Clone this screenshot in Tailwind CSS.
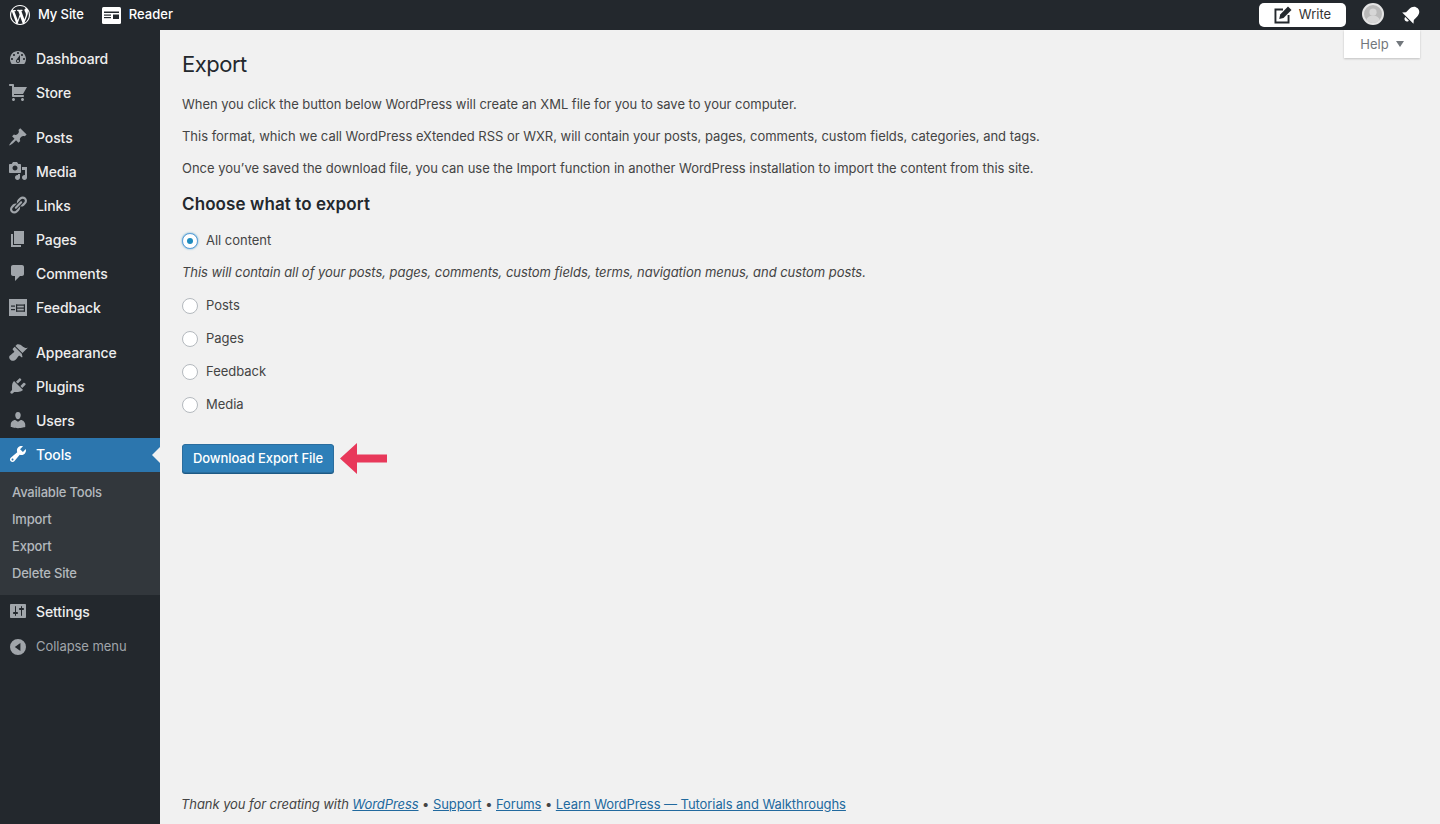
<!DOCTYPE html>
<html lang="en">
  <head>
    <meta charset="UTF-8" />
    <title>Export</title>
    <script src="https://cdn.jsdelivr.net/npm/@tailwindcss/browser@4"></script>
  </head>
  <body class="bg-[#f1f1f1] font-['Inter',sans-serif] text-[13px] text-[#444] h-[824px] overflow-hidden flex flex-col">
    <!-- Admin bar -->
    <header class="h-[30px] bg-[#23282d] flex items-center shrink-0 text-white text-[13px] font-medium">
      <svg class="w-5 h-5 ml-[10px] fill-white" viewBox="0 0 20 20"><path d="M20 10c0-5.51-4.49-10-10-10C4.48 0 0 4.49 0 10c0 5.52 4.48 10 10 10 5.51 0 10-4.48 10-10zM7.78 15.37L4.37 6.22c.55-.02 1.17-.08 1.17-.08.5-.06.44-1.13-.06-1.11 0 0-1.45.11-2.37.11-.18 0-.37 0-.58-.01C4.12 2.69 6.87 1.11 10 1.11c2.33 0 4.45.87 6.05 2.34-.68-.11-1.65.39-1.65 1.58 0 .74.45 1.36.9 2.1.35.61.55 1.36.55 2.46 0 1.49-1.4 5-1.4 5l-3.03-8.37c.54-.02.82-.17.82-.17.5-.05.44-1.25-.06-1.22 0 0-1.44.12-2.38.12-.87 0-2.33-.12-2.33-.12-.5-.03-.56 1.2-.06 1.22l.92.08 1.26 3.41zM17.41 10c.24-.64.74-1.87.43-4.25.7 1.29 1.05 2.71 1.05 4.25 0 3.29-1.73 6.24-4.4 7.78.97-2.59 1.94-5.2 2.92-7.78zM6.1 18.09C3.12 16.65 1.11 13.53 1.11 10c0-1.3.23-2.48.72-3.59C3.25 10.3 4.67 14.2 6.1 18.09zm4.03-6.63l2.58 6.98c-.86.29-1.76.45-2.71.45-.79 0-1.57-.11-2.29-.33.81-2.38 1.62-4.74 2.42-7.1z"/></svg>
      <span class="ml-2 tracking-[-0.1px]">My Site</span>
      <svg class="w-[19px] h-[17px] ml-[18px]" viewBox="0 0 19 17"><rect width="19" height="17" rx="1.5" fill="#fff"/><rect x="2" y="4.500" width="15" height="1.500" fill="#23282d"/><rect x="2" y="7.500" width="7" height="1.200" fill="#23282d"/><rect x="2" y="10" width="7" height="1.200" fill="#23282d"/><rect x="11" y="7.500" width="6" height="4.500" fill="#23282d"/></svg>
      <span class="ml-2">Reader</span>
      <div class="ml-auto mr-[94px] w-[87px] h-[24px] bg-white rounded-[5px] flex items-center justify-center gap-[7px] text-[#333] font-normal">
        <svg class="w-[18px] h-[18px] fill-[#23282d]" viewBox="0 0 18 18"><path d="M.5 2.500H9v1.900H2.400v11.200h11.200V9h1.900v8.500H.5z"/><path d="M14 .5l3.500 3.500-8 8-4.300 1 1-4.500z"/></svg>
        <span>Write</span>
      </div>
    </header>
    <div class="absolute top-[3px] left-[1362px] w-[22px] h-[22px] rounded-full bg-[#b9b9b9] border-2 border-[#e4e4e4] overflow-hidden">
      <svg class="w-full h-full" viewBox="0 0 20 20"><circle cx="10" cy="8" r="4" fill="#d6d6d6"/><path d="M2 20c0-6 4-8 8-8s8 2 8 8z" fill="#d6d6d6"/></svg>
    </div>
    <svg class="absolute top-[5px] left-[1401px] w-5 h-5" viewBox="0 0 20 20"><g transform="rotate(45 10 10)"><path fill="#fff" d="M10 .5c3.400 0 5.500 2.700 5.500 6.500v4.500l2.500 3H2l2.500-3V7C4.500 3.200 6.600.5 10 .5z"/><path fill="#fff" d="M7.500 15.500h5c0 1.500-1 2.700-2.500 2.700s-2.500-1.200-2.500-2.700z"/></g></svg>

    <div class="flex flex-1 min-h-0">
      <!-- Sidebar -->
      <nav class="w-40 shrink-0 bg-[#23282d] pt-3 text-[14px] font-medium text-[#eee] tracking-[-0.1px]">
        <a class="h-[34px] pb-[2px] flex items-center"><svg class="w-5 h-5 ml-2 mr-2 fill-[#a0a5aa]" viewBox="0 0 20 20"><path d="M3.76 16h12.48c1.1-1.37 1.76-3.11 1.76-5 0-4.42-3.58-8-8-8s-8 3.58-8 8c0 1.89.66 3.63 1.76 5zM10 4c.55 0 1 .45 1 1s-.45 1-1 1-1-.45-1-1 .45-1 1-1zM6 6c.55 0 1 .45 1 1s-.45 1-1 1-1-.45-1-1 .45-1 1-1zm8 0c.55 0 1 .45 1 1s-.45 1-1 1-1-.45-1-1 .45-1 1-1zm-5.37 5.55L12 7v6c0 1.1-.9 2-2 2s-2-.9-2-2c0-.57.24-1.08.63-1.45zM4 10c.55 0 1 .45 1 1s-.45 1-1 1-1-.45-1-1 .45-1 1-1zm12 0c.55 0 1 .45 1 1s-.45 1-1 1-1-.45-1-1 .45-1 1-1zm-5 3c0-.55-.45-1-1-1s-1 .45-1 1 .45 1 1 1 1-.45 1-1z"/></svg>Dashboard</a>
        <a class="h-[34px] pb-[2px] flex items-center mb-[11px]"><svg class="w-5 h-5 ml-2 mr-2 fill-[#a0a5aa]" viewBox="0 0 20 20"><path d="M6 13h9c.55 0 1 .45 1 1s-.45 1-1 1H5c-.55 0-1-.45-1-1V4H2c-.55 0-1-.45-1-1s.45-1 1-1h3c.55 0 1 .45 1 1v2h13l-4 7H6v1zm-.5 3c.83 0 1.5.67 1.5 1.5S6.33 19 5.5 19 4 18.33 4 17.5 4.67 16 5.5 16zm9 0c.83 0 1.5.67 1.5 1.5s-.67 1.5-1.5 1.5-1.5-.67-1.5-1.5.67-1.5 1.5-1.5z"/></svg>Store</a>
        <a class="h-[34px] pb-[2px] flex items-center"><svg class="w-5 h-5 ml-2 mr-2 fill-[#a0a5aa]" viewBox="0 0 20 20"><path d="M10.44 3.02l1.82-1.82 6.36 6.35-1.83 1.82c-1.05-.68-2.48-.57-3.41.36l-.75.75c-.92.93-1.04 2.35-.35 3.41l-1.83 1.82-2.41-2.41-2.8 2.79c-.42.42-3.38 2.71-3.8 2.29s1.86-3.39 2.28-3.81l2.79-2.79L4.1 9.36l1.83-1.82c1.05.69 2.48.57 3.4-.36l.75-.75c.93-.92 1.05-2.35.36-3.41z"/></svg>Posts</a>
        <a class="h-[34px] pb-[2px] flex items-center"><svg class="w-5 h-5 ml-2 mr-2 fill-[#a0a5aa]" viewBox="0 0 20 20"><path d="M13 11V4c0-.55-.45-1-1-1h-1.67L9 1H5L3.67 3H2c-.55 0-1 .45-1 1v7c0 .55.45 1 1 1h10c.55 0 1-.45 1-1zM7 4.500c1.380 0 2.500 1.120 2.500 2.500S8.380 9.500 7 9.500 4.500 8.380 4.500 7 5.620 4.500 7 4.500zM14 6h5v10.500c0 1.380-1.120 2.500-2.500 2.500S14 17.880 14 16.500s1.120-2.500 2.500-2.500c.17 0 .34.02.5.05V9h-3V6zm-4 8.050V13h2v3.500c0 1.380-1.120 2.500-2.500 2.500S7 17.880 7 16.500 8.120 14 9.500 14c.17 0 .34.02.5.05z"/></svg>Media</a>
        <a class="h-[34px] pb-[2px] flex items-center"><svg class="w-5 h-5 ml-2 mr-2 fill-[#a0a5aa]" viewBox="0 0 20 20"><path d="M17.74 2.76c1.68 1.69 1.68 4.41 0 6.1l-1.53 1.52c-1.12 1.12-2.7 1.47-4.14 1.09l2.62-2.61.76-.77.76-.76c.84-.84.84-2.2 0-3.04-.84-.85-2.2-.85-3.04 0l-.77.76-3.38 3.38c-.37-1.44-.02-3.02 1.1-4.14l1.52-1.53c1.69-1.68 4.42-1.68 6.1 0zM8.59 13.43l5.34-5.34c.42-.42.42-1.1 0-1.52-.44-.43-1.13-.39-1.53 0l-5.33 5.34c-.42.42-.42 1.1 0 1.52.44.43 1.13.39 1.52 0zm-.76 2.29l4.14-4.15c.38 1.44.03 3.02-1.09 4.14l-1.52 1.53c-1.69 1.68-4.41 1.68-6.1 0-1.68-1.68-1.68-4.42 0-6.1l1.53-1.52c1.12-1.12 2.7-1.47 4.14-1.1l-4.14 4.15c-.85.84-.85 2.2 0 3.05.84.84 2.2.84 3.04 0z"/></svg>Links</a>
        <a class="h-[34px] pb-[2px] flex items-center"><svg class="w-5 h-5 ml-2 mr-2 fill-[#a0a5aa]" viewBox="0 0 20 20"><path d="M6 15V2h10v13H6zm-1 1h8v2H3V5h2v11z"/></svg>Pages</a>
        <a class="h-[34px] pb-[2px] flex items-center"><svg class="w-5 h-5 ml-2 mr-2 fill-[#a0a5aa]" viewBox="0 0 20 20"><path d="M5 2h9c1.1 0 2 .9 2 2v7c0 1.1-.9 2-2 2h-2l-5 5v-5H5c-1.1 0-2-.9-2-2V4c0-1.1.9-2 2-2z"/></svg>Comments</a>
        <a class="h-[34px] pb-[2px] flex items-center mb-[11px]"><svg class="w-5 h-5 ml-2 mr-2" viewBox="0 0 20 20"><rect x="1" y="2" width="18" height="17" fill="#a0a5aa"/><rect x="3" y="8.500" width="4" height="1.200" fill="#23282d"/><rect x="3" y="12" width="4" height="1.200" fill="#23282d"/><rect x="8" y="7.500" width="9" height="1.200" fill="#23282d"/><rect x="8" y="10.500" width="9" height="1.200" fill="#23282d"/><rect x="8" y="13.500" width="9" height="1.200" fill="#23282d"/><rect x="8" y="7.500" width="1.200" height="7" fill="#23282d"/><rect x="15.800" y="7.500" width="1.200" height="7" fill="#23282d"/></svg>Feedback</a>
        <a class="h-[34px] pb-[2px] flex items-center"><svg class="w-5 h-5 ml-2 mr-2 fill-[#a0a5aa]" viewBox="0 0 20 20"><path d="M14.480 11.060L7.410 3.990l1.500-1.500c.5-.56 2.300-.47 3.510.32 1.210.8 1.430 1.280 2.910 2.100 1.180.64 2.450 1.260 4.450.85zm-.71.71L6.700 4.700 4.930 6.470c-.39.39-.39 1.020 0 1.410l1.060 1.060c.39.39.39 1.030 0 1.420-.6.6-1.430 1.110-2.210 1.690-.35.26-.7.53-1.010.84C1.430 13.230.91 14.750 1.300 15.890c.21.63.56 1.240 1.060 1.740.5.5 1.100.85 1.740 1.060 1.140.39 2.660-.13 3.990-1.470.31-.31.58-.66.84-1.010.58-.78 1.090-1.610 1.690-2.210.39-.39 1.030-.39 1.420 0l1.060 1.060c.39.39 1.020.39 1.410 0z"/></svg>Appearance</a>
        <a class="h-[34px] pb-[2px] flex items-center"><svg class="w-5 h-5 ml-2 mr-2 fill-[#a0a5aa]" viewBox="0 0 20 20"><path d="M13.110 4.360L9.870 7.600 8 5.730l3.240-3.240c.35-.34 1.050-.2 1.560.32.52.51.66 1.210.31 1.550zm-8 1.770l.91-1.120 9.010 9.010-1.190.84c-.71.71-2.630 1.160-3.820 1.160H6.140L4.900 17.260c-.59.59-1.540.59-2.120 0-.59-.58-.59-1.530 0-2.120l1.240-1.240v-3.880c0-1.130.4-3.190 1.090-3.890zm7.260 3.970l3.240-3.240c.34-.35 1.040-.21 1.550.31.52.51.66 1.210.31 1.550l-3.240 3.250z"/></svg>Plugins</a>
        <a class="h-[34px] pb-[2px] flex items-center"><svg class="w-5 h-5 ml-2 mr-2 fill-[#a0a5aa]" viewBox="0 0 20 20"><path d="M10 9.250c-2.270 0-2.730-3.440-2.730-3.440C7 4.020 7.820 2 9.970 2c2.160 0 2.980 2.020 2.710 3.810 0 0-.41 3.440-2.680 3.440zm0 2.570L12.720 10c2.390 0 4.520 2.330 4.520 4.530v2.490s-3.650 1.130-7.240 1.130c-3.650 0-7.240-1.130-7.240-1.130v-2.490c0-2.250 1.940-4.480 4.470-4.480z"/></svg>Users</a>
        <a class="relative h-[34px] pb-[2px] flex items-center bg-[#2c76ae] text-white"><svg class="w-5 h-5 ml-2 mr-2 fill-white" viewBox="0 0 20 20"><path d="M16.680 9.770c-1.340 1.340-3.300 1.670-4.950.99l-5.410 6.520c-.99.99-2.590.99-3.580 0s-.99-2.590 0-3.570l6.520-5.420c-.68-1.650-.35-3.610.99-4.950 1.280-1.280 3.120-1.620 4.720-1.060l-2.890 2.890 2.820 2.820 2.860-2.870c.53 1.580.18 3.390-1.080 4.670zM3.810 16.210c.4.39 1.040.39 1.430 0 .4-.4.4-1.040 0-1.430-.39-.4-1.030-.4-1.430 0-.39.39-.39 1.030 0 1.430z"/></svg>Tools<span class="absolute right-0 top-[9px] border-y-[8px] border-y-transparent border-r-[8px] border-r-[#f1f1f1]"></span></a>
        <!-- Tools submenu -->
        <div class="bg-[#32373c] pt-[7px] pb-[8px] pl-3 text-[13px] text-[#b4b9be] tracking-[-0.2px]">
          <a class="h-[27px] flex items-center">Available Tools</a>
          <a class="h-[27px] flex items-center">Import</a>
          <a class="h-[27px] flex items-center">Export</a>
          <a class="h-[27px] flex items-center">Delete Site</a>
        </div>
        <a class="h-[34px] pb-[2px] flex items-center"><svg class="w-5 h-5 ml-2 mr-2 fill-[#a0a5aa]" viewBox="0 0 20 20"><path d="M18 16V4c0-.55-.45-1-1-1H3c-.55 0-1 .45-1 1v12c0 .55.45 1 1 1h14c.55 0 1-.45 1-1zM8 11h1c.55 0 1 .45 1 1s-.45 1-1 1H8v1.500c0 .28-.22.5-.5.5s-.5-.22-.5-.5V13H6c-.55 0-1-.45-1-1s.45-1 1-1h1V5.500c0-.28.22-.5.5-.5s.5.22.5.5V11zm5-2h-1c-.55 0-1-.45-1-1s.45-1 1-1h1V5.500c0-.28.22-.5.5-.5s.5.22.5.5V7h1c.55 0 1 .45 1 1s-.45 1-1 1h-1v5.500c0 .28-.22.5-.5.5s-.5-.22-.5-.5V9z"/></svg>Settings</a>
        <a class="h-[34px] pt-[2px] flex items-center text-[13px] font-normal text-[#a0a5aa] tracking-[-0.05px]"><svg class="w-4 h-4 ml-[10px] mr-[10px] fill-[#a0a5aa]" viewBox="0 0 20 20"><path fill-rule="evenodd" d="M10 20a10 10 0 100-20 10 10 0 000 20zm3-15v10l-7-5z"/></svg>Collapse menu</a>
      </nav>

      <!-- Main content -->
      <main class="relative flex-1 flex flex-col pl-[22px] tracking-[-0.02px]">
        <div class="absolute top-0 right-5 w-[76px] h-7 pt-[1px] bg-white shadow-[0_1px_2px_rgba(0,0,0,0.2)] flex items-center justify-center gap-[7px] text-[#72777c]">Help<span class="mb-[1px] border-x-[4px] border-x-transparent border-t-[6px] border-t-[#72777c]"></span></div>

        <h1 class="mt-5 text-[22px] leading-[29px] tracking-[-0.5px] text-[#23282d]">Export</h1>
        <p class="mt-4 leading-[18px]">When you click the button below WordPress will create an XML file for you to save to your computer.</p>
        <p class="mt-[14px] leading-[18px]">This format, which we call WordPress eXtended RSS or WXR, will contain your posts, pages, comments, custom fields, categories, and tags.</p>
        <p class="mt-[14px] leading-[18px]">Once you’ve saved the download file, you can use the Import function in another WordPress installation to import the content from this site.</p>
        <h2 class="mt-[15px] text-[17px] leading-[24px] font-semibold tracking-[0.1px] text-[#23282d]">Choose what to export</h2>

        <label class="mt-4 h-[18px] flex items-center gap-2"><span class="w-4 h-4 rounded-full bg-white border border-[#5b9dd9] shadow-[0_0_2px_rgba(30,140,190,0.8)] flex items-center justify-center"><span class="w-[6px] h-[6px] rounded-full bg-[#1e8cbe]"></span></span>All content</label>
        <p class="mt-[13px] h-[18px] italic tracking-[-0.05px]">This will contain all of your posts, pages, comments, custom fields, terms, navigation menus, and custom posts.</p>
        <label class="mt-4 h-[18px] flex items-center gap-2"><span class="w-4 h-4 rounded-full bg-white border border-[#b4b9be]"></span>Posts</label>
        <label class="mt-[15px] h-[18px] flex items-center gap-2"><span class="w-4 h-4 rounded-full bg-white border border-[#b4b9be]"></span>Pages</label>
        <label class="mt-[15px] h-[18px] flex items-center gap-2"><span class="w-4 h-4 rounded-full bg-white border border-[#b4b9be]"></span>Feedback</label>
        <label class="mt-[15px] h-[18px] flex items-center gap-2"><span class="w-4 h-4 rounded-full bg-white border border-[#b4b9be]"></span>Media</label>

        <div class="mt-[29px] flex items-center gap-[6px]">
          <button class="w-[152px] h-[29px] rounded-[3px] bg-[#2e7fb8] border border-[#2a6d9e] shadow-[0_1px_0_#1d5a85] text-white font-medium tracking-[-0.08px]">Download Export File</button>
          <svg class="w-[47px] h-[31px] fill-[#e8385a]" viewBox="0 0 47 31"><path d="M0 15.500L17 0v11.500h30v8H17V31z"/></svg>
        </div>

        <footer class="mt-auto mb-[11px] -ml-px leading-[18px] italic tracking-[-0.07px]">Thank you for creating with <a class="text-[#21699e] underline">WordPress</a> <span class="not-italic">•</span> <a class="not-italic text-[#21699e] underline">Support</a> <span class="not-italic">•</span> <a class="not-italic text-[#21699e] underline">Forums</a> <span class="not-italic">•</span> <a class="not-italic text-[#21699e] underline">Learn WordPress — Tutorials and Walkthroughs</a></footer>
      </main>
    </div>
  </body>
</html>
